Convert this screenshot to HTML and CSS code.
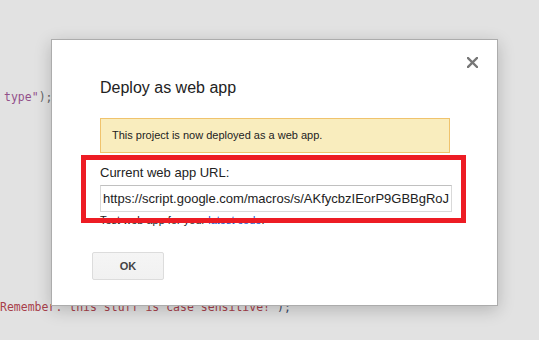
FILE: index.html
```html
<!DOCTYPE html>
<html lang="en">
<head>
    <meta charset="UTF-8">
    <meta name="viewport" content="width=device-width, initial-scale=1.0">
    <title>Deploy as web app</title>
    <link rel="stylesheet" href="styles.css">
</head>
<body>
    <div class="editor">
        <div class="line"><span class="str">type"</span><span class="punct">);</span></div>
        <div class="line"></div>
        <div class="line"></div>
        <div class="line"></div>
        <div class="line"></div>
        <div class="line"></div>
        <div class="line"></div>
        <div class="line"></div>
        <div class="line"></div>
        <div class="line"></div>
        <div class="line"></div>
        <div class="line"></div>
        <div class="line"></div>
        <div class="line"></div>
        <div class="line line-last"><span class="str2">Remember: this stuff is case sensitive!"</span><span class="punct2">);</span></div>
    </div>

    <div class="dialog">
        <button class="close" aria-label="Close">
            <svg width="11" height="11" viewBox="0 0 11 11">
                <path d="M1 1 L10 10 M10 1 L1 10" stroke="#777" stroke-width="2.4" stroke-linecap="square"/>
            </svg>
        </button>
        <h2 class="title">Deploy as web app</h2>
        <div class="notice">This project is now deployed as a web app.</div>
        <div class="label">Current web app URL:</div>
        <input class="url" type="text" value="https://script.google.com/macros/s/AKfycbzIEorP9GBBgRoJx3m/exec" readonly>
        <div class="hint">Test web app for your <a href="#">latest code</a>.</div>
        <button class="ok">OK</button>
        <div class="highlight"></div>
    </div>
</body>
</html>
```

FILE: styles.css
```css
body {
    margin: 0;
    background-color: #e2e2e2;
    font-family: "Liberation Sans", Arial, sans-serif;
    height: 340px;
    overflow: hidden;
}
.editor {
    padding-top: 90px;
    font-family: "DejaVu Sans Mono", monospace;
    font-size: 11.5px;
}
.line {
    height: 15px;
    line-height: 15px;
    padding-left: 4px;
    white-space: pre;
}
.line-last {
    padding-left: 0;
}
.str {
    color: #92508a;
}
.punct {
    color: #666;
}
.str2 {
    color: #a8404a;
}
.punct2 {
    color: #3a4a6a;
}
.dialog {
    position: absolute; /* floats over the editor */
    left: 51px;
    top: 39px;
    width: 447px;
    height: 267px;
    box-sizing: border-box;
    background-color: white;
    border: 1px solid #acacac;
    box-shadow: 0 4px 16px rgba(0, 0, 0, 0.2);
    padding: 39px 46px 0 48px;
    color: #222;
}
.close {
    position: absolute;
    top: 17px;
    right: 19px;
    width: 11px;
    height: 11px;
    padding: 0;
    border: none;
    background: none;
    display: flex;
}
.title {
    margin: 0;
    font-size: 16px;
    line-height: 18px;
    font-weight: normal;
    color: #222;
}
.notice {
    margin-top: 21px;
    width: 350px;
    height: 35px;
    box-sizing: border-box;
    background-color: #f9edbe;
    border: 1px solid #f0c36d;
    padding-left: 11px;
    font-size: 11px;
    line-height: 33px;
    color: #222;
}
.label {
    margin-top: 12px;
    font-size: 13px;
    line-height: 15px;
}
.url {
    display: block;
    margin: 5px 0 0 0;
    width: 352px;
    height: 27px;
    box-sizing: border-box;
    border: 1px solid #d9d9d9;
    border-top-color: #c0c0c0;
    padding: 0 2px;
    font-family: "Liberation Sans", Arial, sans-serif;
    font-size: 13px;
    color: #222;
    outline: none;
}
.hint {
    margin-top: 2px;
    font-size: 11px;
    line-height: 13px;
    color: #222;
}
.hint a {
    color: #15c;
    text-decoration: none;
}
.ok {
    display: block;
    margin: 25px 0 0 -8px;
    width: 72px;
    height: 28px;
    box-sizing: border-box;
    background: linear-gradient(#f5f5f5, #f1f1f1);
    border: 1px solid #dcdcdc;
    border-radius: 2px;
    font-family: "Liberation Sans", Arial, sans-serif;
    font-size: 11px;
    font-weight: bold;
    color: #444;
    padding: 0;
}
.highlight {
    position: absolute; /* annotation drawn over the URL field */
    left: 29px;
    top: 115px;
    width: 385px;
    height: 68px;
    box-sizing: border-box;
    border: 5px solid #ed1c24;
    pointer-events: none;
}
```
